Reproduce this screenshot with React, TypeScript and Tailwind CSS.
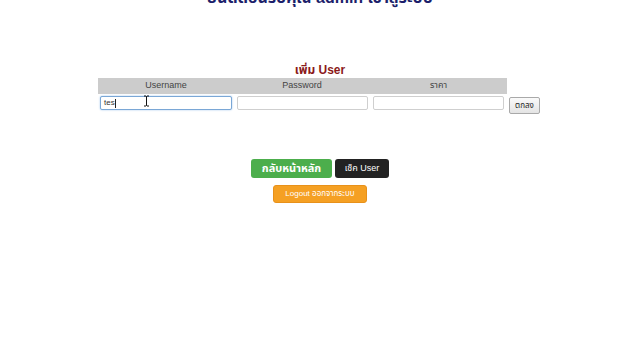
import React from "react";

export default function App() {
  const f = { fontFamily: '"Liberation Sans", "Noto Sans", "Noto Sans Thai", Tahoma, sans-serif' };
  return (
    <div className="w-[640px] h-[360px] bg-white overflow-hidden relative" style={f}>
      <div className="flex flex-col items-center">
        <div className="-mt-[12px] h-[20px] text-[16px] font-bold text-[#1c1f6b] leading-[20px] whitespace-nowrap">
          ยินดีต้อนรับคุณ admin เข้าสู่ระบบ
        </div>
        <div className="mt-[55px] text-[12px] font-bold text-[#8b1a1a] leading-[14px]">เพิ่ม User</div>
        <div className="mt-[1px] grid grid-cols-[136px_136px_137px_35px]">
          <div className="bg-[#cccccc] h-[16px] text-[9px] text-[#444] flex items-center justify-center">Username</div>
          <div className="bg-[#cccccc] h-[16px] text-[9px] text-[#444] flex items-center justify-center">Password</div>
          <div className="bg-[#cccccc] h-[16px] text-[9px] text-[#444] flex items-center justify-center">ราคา</div>
          <div className="h-[16px]" />
          <div className="pt-[2px] pl-[2px] pr-[2px]">
            <div className="h-[14px] border border-[#7aa7d6] rounded-[2px] bg-white text-[8px] text-[#333] flex items-center pl-[3px] shadow-[0_0_2px_#9cc3ea]">
              tes<span className="w-[1px] h-[9px] bg-[#222]" />
            </div>
          </div>
          <div className="pt-[2px] pl-[3px] pr-[2px]">
            <div className="h-[14px] border border-[#cfcfcf] rounded-[2px] bg-white" />
          </div>
          <div className="pt-[2px] pl-[3px] pr-[3px]">
            <div className="h-[14px] border border-[#cfcfcf] rounded-[2px] bg-white" />
          </div>
          <div className="pt-[3px] pl-[2px]">
            <div className="w-[31px] h-[17px] border border-[#a9a9a9] rounded-[2px] bg-gradient-to-b from-[#fafafa] to-[#e4e4e4] text-[8px] text-[#222] flex items-center justify-center">
              ตกลง
            </div>
          </div>
        </div>
        <div className="mt-[45px] flex gap-[3px]">
          <div className="w-[81px] h-[19px] bg-[#4cae4c] rounded-[3px] text-white text-[11px] font-bold flex items-center justify-center">
            กลับหน้าหลัก
          </div>
          <div className="w-[54px] h-[19px] bg-[#222222] rounded-[3px] text-white text-[9px] flex items-center justify-center">
            เช็ค User
          </div>
        </div>
        <div className="mt-[7px] w-[94px] h-[18px] bg-[#f5a023] rounded-[3px] text-white text-[8px] flex items-center justify-center border border-[#e8911a]">
          Logout ออกจากระบบ
        </div>
      </div>
      <svg className="absolute left-[143px] top-[95px]" width="7" height="12" viewBox="0 0 7 12">
        <path d="M1 1h2l.5.5.5-.5h2M3.5 1.5v9M1 11h2l.5-.5.5.5h2" stroke="#111" strokeWidth="1" fill="none" />
      </svg>
    </div>
  );
}
